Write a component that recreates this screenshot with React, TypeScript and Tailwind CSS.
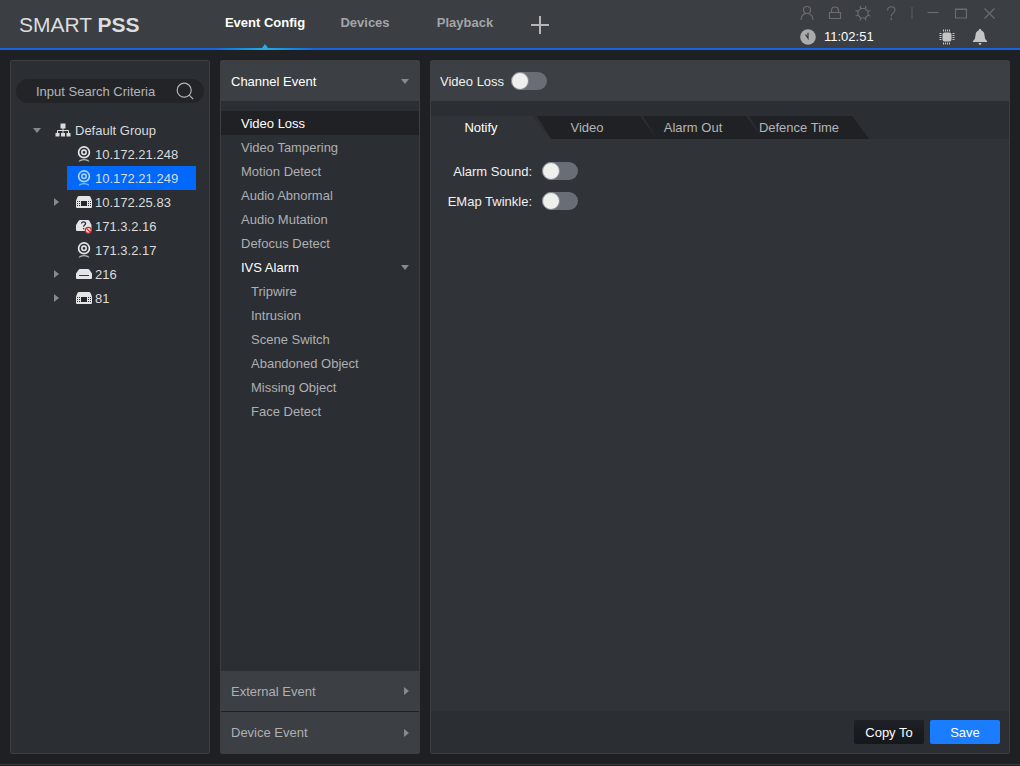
import React, { useState } from 'react';
import clsx from 'clsx';

type IconProps = { className?: string };

const CameraIcon: React.FC<IconProps> = ({ className }) => (
  <svg viewBox="0 0 16 16" className={clsx('h-4 w-4', className)} fill="none" stroke="currentColor">
    <circle cx="8" cy="6.3" r="5.4" strokeWidth="1.7" />
    <circle cx="8" cy="6.3" r="2.2" strokeWidth="1.6" />
    <path d="M3 15.4c2-2.4 8-2.4 10 0" strokeWidth="1.1" opacity=".75" />
  </svg>
);

const NvrIcon: React.FC<IconProps> = ({ className }) => (
  <svg viewBox="0 0 16 16" className={clsx('h-4 w-4', className)}>
    <path d="M3 2h10q1 0 1.500 1L16 6.500V13q0 1-1 1H1q-1 0-1-1V6.500L1.500 3Q2 2 3 2z" fill="currentColor" />
    <rect x="5" y="7" width="6" height="5" fill="#25272b" />
    <path
      d="M1 7.500h3M1 9.500h3M1 11.500h3M12 7.500h3M12 9.500h3M12 11.500h3"
      stroke="#2b2d31"
      strokeWidth="1"
      strokeDasharray="1 1"
    />
  </svg>
);

const DvrIcon: React.FC<IconProps> = ({ className }) => (
  <svg viewBox="0 0 16 16" className={clsx('h-4 w-4', className)}>
    <path d="M4 3h8q1 0 1.500 1L16 7.500V12q0 1-1 1H1q-1 0-1-1V7.500L2.500 4Q3 3 4 3z" fill="currentColor" />
    <path d="M3 9.500h10" stroke="#35373b" strokeWidth="1" />
  </svg>
);

const OfflineIcon: React.FC<IconProps> = ({ className }) => (
  <svg viewBox="0 0 16 16" className={clsx('h-4 w-4', className)} fill="none">
    <path d="M4 2h8q1 0 1.500 1L15.500 7v5.500q0 .5-1 .5H1q-1 0-1-1V7l2.500-4Q3 2 4 2z" fill="currentColor" />
    <path d="M5.6 5.6c0-2.4 4-2.4 4 0 0 1.5-2 1.5-2 3.2M7.6 10v1.2" stroke="#2b2d31" strokeWidth="1.3" />
    <circle cx="12.3" cy="12.3" r="3" fill="#f3dede" stroke="#d0242c" strokeWidth="1.2" />
    <path d="M10.4 10.400l3.800 3.800" stroke="#d0242c" strokeWidth="1.2" />
  </svg>
);

const GroupIcon: React.FC<IconProps> = ({ className }) => (
  <svg viewBox="0 0 16 16" className={clsx('h-4 w-4', className)}>
    <path d="M8 6v3M2.500 11V8.500h11V11M8 8v3" stroke="currentColor" strokeWidth="1" fill="none" />
    <path d="M5.500 1.500h5v5h-5zM.5 11h4v3.500h-4zM6 11h4v3.500H6zM11.500 11h4v3.500h-4z" fill="currentColor" />
  </svg>
);

const CaretDown = () => (
  <svg viewBox="0 0 8 5" className="h-[5px] w-2 text-[#87898c]">
    <path d="M0 0h8L4 5z" fill="currentColor" />
  </svg>
);

const CaretRight = () => (
  <svg viewBox="0 0 5 8" className="h-2 w-[5px] text-[#87898c]">
    <path d="M0 0v8l5-4z" fill="currentColor" />
  </svg>
);

const windowActions = [
  { label: 'User', d: 'M8 1.500a3.500 3.500 0 1 1 0 7a3.500 3.500 0 1 1 0-7M2 15c.3-3.500 2-6 4.500-6.700M14 15c-.3-3.500-2-6-4.500-6.700' },
  { label: 'Lock', d: 'M2.500 7.500h11v6h-11zM4.500 7.500V5.500q0-3.500 3.500-3.500 3.500 0 3.500 3.500v2' },
  {
    label: 'Settings',
    d: 'M5.800 3.500h4.400l2.800 2.800v3.900l-2.800 2.800H5.800L3 10.200V6.300zM5.800 3.500L5 1M10.200 3.500L11 1M13 6.300l2.500-.8M13 10.200l2.500.8M10.200 13l.8 2.500M5.800 13L5 15.500M3 10.200L.5 11M3 6.300L.5 5.500',
  },
  { label: 'Help', d: 'M4.500 5.500c0-5 7.500-4.800 7.500-.5 0 2.800-3.700 3-3.700 6.500M8.300 13v2' },
];

const windowControls = [
  { label: 'Minimize', d: 'M2.500 7.500h11' },
  { label: 'Maximize', d: 'M2.500 4h11v9h-11zM2.500 4.500h11' },
  { label: 'Close', d: 'M3.500 3.500l10 10M13.500 3.500l-10 10' },
];

const WindowButton: React.FC<{ label: string; d: string }> = ({ label, d }) => (
  <button aria-label={label} className="flex h-6 w-7 items-center justify-center text-[#6a6c70]">
    <svg viewBox="0 0 16 16" className="h-4 w-4" fill="none" stroke="currentColor" strokeWidth="1.2">
      <path d={d} />
    </svg>
  </button>
);

const navItems = ['Event Config', 'Devices', 'Playback'];

const Header: React.FC = () => {
  const [active, setActive] = useState('Event Config');

  return (
    <header className="flex h-[50px] border-b-2 border-[#1766e0] bg-[#3b3e42]">
      <div className="flex w-[215px] items-center pl-[19px] text-[21px] text-[#dcdddf]">
        <span>
          SMART <b>PSS</b>
        </span>
      </div>
      <nav className="flex">
        {navItems.map((item) => (
          <button
            key={item}
            onClick={() => setActive(item)}
            className={clsx(
              'relative h-12 w-[100px] pb-[3px] text-[13px] font-bold',
              active === item ? 'text-white' : 'text-[#a3a5a8]'
            )}
          >
            {item}
            {active === item && (
              <span className="absolute inset-x-0 -bottom-[2px] flex flex-col items-center">
                <svg viewBox="0 0 6 4" className="h-1 w-1.5">
                  <path d="M3 0l3 4H0z" fill="#25aee4" />
                </svg>
                <span className="h-[2px] w-full bg-linear-to-r from-[#1766e0] via-[#25aee4] to-[#1766e0]" />
              </span>
            )}
          </button>
        ))}
        <button aria-label="Add" className="ml-4 flex h-12 items-center pt-[2px] text-[#b4b6b8]">
          <svg viewBox="0 0 18 18" className="h-[18px] w-[18px]" stroke="currentColor" strokeWidth="2">
            <path d="M9 0v18M0 9h18" />
          </svg>
        </button>
      </nav>
      <div className="ml-auto flex flex-col pt-px pr-[17px]">
        <div className="flex items-center">
          {windowActions.map((a) => (
            <WindowButton key={a.label} {...a} />
          ))}
          <span className="mx-1.5 h-3 w-[2px] bg-[#4a4d51]" />
          {windowControls.map((c) => (
            <WindowButton key={c.label} {...c} />
          ))}
        </div>
        <div className="flex h-6 items-center pr-[15px] pl-[7px]">
          <svg viewBox="0 0 16 16" className="h-4 w-4">
            <circle cx="8" cy="8" r="7.8" fill="#a9abad" />
            <path d="M5.500 5.500L8 9.200V3.800" stroke="#3b3e42" strokeWidth="1.300" fill="none" />
          </svg>
          <time className="ml-2 text-[13px] text-white">11:02:51</time>
          <div className="ml-auto flex items-center gap-[17px] text-[#c3c4c6]">
            <button aria-label="System status">
              <svg viewBox="0 0 16 16" className="h-4 w-4">
                <rect x="3.500" y="3.500" width="9" height="9" rx="2" fill="currentColor" />
                <path
                  d="M4.500 0.500v2M6.500 0.500v2M8.500 0.500v2M10.500 0.500v2M4.500 13.500v2M6.500 13.500v2M8.500 13.500v2M10.500 13.500v2M0.500 4.500h2M0.500 6.500h2M0.500 8.500h2M0.500 10.500h2M13.500 4.500h2M13.500 6.500h2M13.500 8.500h2M13.500 10.500h2"
                  stroke="currentColor"
                  strokeWidth="1"
                />
              </svg>
            </button>
            <button aria-label="Alarms">
              <svg viewBox="0 0 16 16" className="h-4 w-4" fill="currentColor">
                <path d="M8 0q1.300 0 1.400 1.400Q12.500 2.500 12.500 6.500q0 3.500 2.500 5.500v1H1v-1q2.500-2 2.500-5.500Q3.500 2.500 6.600 1.400 6.700 0 8 0M6.500 14h3q-.3 2-1.500 2t-1.500-2" />
              </svg>
            </button>
          </div>
        </div>
      </div>
    </header>
  );
};

const devices = [
  { name: '10.172.21.248', icon: CameraIcon },
  { name: '10.172.21.249', icon: CameraIcon },
  { name: '10.172.25.83', icon: NvrIcon, expandable: true },
  { name: '171.3.2.16', icon: OfflineIcon },
  { name: '171.3.2.17', icon: CameraIcon },
  { name: '216', icon: DvrIcon, expandable: true },
  { name: '81', icon: NvrIcon, expandable: true },
];

const DeviceTree: React.FC = () => {
  const [selected, setSelected] = useState('10.172.21.249');

  return (
    <aside className="w-[200px] shrink-0 rounded-xs border border-[#3c3e41] bg-[#2b2e32] px-[5px] pt-[18px]">
      <div className="flex h-6 items-center rounded-full bg-[#222428] pr-2.5 pl-5">
        <input
          type="text"
          aria-label="Search devices"
          placeholder="Input Search Criteria"
          className="h-6 w-full min-w-0 bg-transparent pt-px outline-none placeholder:text-[#b3b5b7]"
        />
        <button aria-label="Search" className="text-[#b3b5b7]">
          <svg viewBox="0 0 18 18" className="h-[18px] w-[18px]" fill="none" stroke="currentColor" strokeWidth="1.200">
            <circle cx="8.200" cy="8.200" r="7" />
            <path d="M13.200 13.200l4 4" />
          </svg>
        </button>
      </div>
      <ul className="mt-[15px] text-[#dadbdc]">
        <li>
          <button className="flex h-6 items-center pl-[17px]">
            <CaretDown />
            <GroupIcon className="ml-[14px]" />
            <span className="ml-1">Default Group</span>
          </button>
          <ul>
            {devices.map(({ name, icon: Icon, expandable }) => (
              <li key={name} className="flex h-6 items-center">
                <span className="flex w-[51px] justify-end pr-2">{expandable && <CaretRight />}</span>
                <button
                  onClick={() => setSelected(name)}
                  className={clsx(
                    'flex h-6 items-center gap-[3px] pr-[18px] pl-[9px]',
                    selected === name && 'bg-[#0068fb]'
                  )}
                >
                  <Icon className={selected === name ? 'text-[#a9d4ff]' : 'text-[#e4e5e6]'} />
                  {name}
                </button>
              </li>
            ))}
          </ul>
        </li>
      </ul>
    </aside>
  );
};

const channelEvents = [
  'Video Loss',
  'Video Tampering',
  'Motion Detect',
  'Audio Abnormal',
  'Audio Mutation',
  'Defocus Detect',
];

const ivsEvents = ['Tripwire', 'Intrusion', 'Scene Switch', 'Abandoned Object', 'Missing Object', 'Face Detect'];

const EventMenu: React.FC<{ event: string; onSelect: (event: string) => void }> = ({ event, onSelect }) => (
  <aside className="flex w-[200px] shrink-0 flex-col rounded-xs border border-[#3c3e41] bg-[#2b2e32] text-[#aeb0b2]">
    <button className="flex h-10 items-center justify-between bg-[#3c3f43] px-2.5 text-white">
      Channel Event
      <CaretDown />
    </button>
    <ul className="flex-1 pt-2.5">
      {channelEvents.map((name) => (
        <li key={name}>
          <button
            onClick={() => onSelect(name)}
            className={clsx('h-6 w-full pl-5 text-left', event === name && 'bg-[#202124] text-white')}
          >
            {name}
          </button>
        </li>
      ))}
      <li>
        <button className="flex h-6 w-full items-center justify-between pr-2.5 pl-5 text-white">
          IVS Alarm
          <CaretDown />
        </button>
        <ul>
          {ivsEvents.map((name) => (
            <li key={name}>
              <button
                onClick={() => onSelect(name)}
                className={clsx('h-6 w-full pl-[30px] text-left', event === name && 'bg-[#202124] text-white')}
              >
                {name}
              </button>
            </li>
          ))}
        </ul>
      </li>
    </ul>
    <button className="flex h-10 items-center justify-between bg-[#3c3f43] px-2.5">
      External Event
      <CaretRight />
    </button>
    <button className="flex h-[42px] items-center justify-between border-t border-[#1f2124] bg-[#3c3f43] px-2.5">
      Device Event
      <CaretRight />
    </button>
  </aside>
);

const Switch: React.FC<{ id: string }> = ({ id }) => (
  <input
    id={id}
    type="checkbox"
    role="switch"
    className="h-[18px] w-9 appearance-none rounded-full bg-[#696d75] before:block before:size-[18px] before:rounded-full before:border before:border-[#85888e] before:bg-[#efefee] checked:bg-[#0068fb] checked:before:ml-auto"
  />
);

const tabs = ['Notify', 'Video', 'Alarm Out', 'Defence Time'];

const EventSettings: React.FC<{ event: string }> = ({ event }) => {
  const [tab, setTab] = useState('Notify');

  return (
    <main className="flex min-w-0 flex-1 flex-col rounded-xs border border-[#3c3e41] bg-[#303337]">
      <div className="flex h-10 items-center gap-[7px] bg-[#3c3f43] pl-[9px] text-[#f0f0f0]">
        <label htmlFor="event-enabled">{event}</label>
        <Switch id="event-enabled" />
      </div>
      <div role="tablist" className="flex bg-[#2b2e32] pt-[15px]">
        {tabs.map((name, i) => (
          <button
            key={name}
            role="tab"
            aria-selected={tab === name}
            onClick={() => setTab(name)}
            className={clsx(
              'h-[23px] w-[120px] pr-5 [clip-path:polygon(0_0,103px_0,100%_100%,14px_100%)] first:[clip-path:polygon(0_0,101px_0,100%_100%,0_100%)]',
              i > 0 && '-ml-[14px]',
              tab === name ? 'bg-[#303337] text-white' : 'bg-[#202125] text-[#b3b5b7]'
            )}
          >
            {name}
          </button>
        ))}
      </div>
      <div className="flex-1 pt-[17px] text-[#f0f0f0]">
        <div className="flex h-[30px] items-center gap-2.5">
          <label htmlFor="alarm-sound" className="w-[101px] text-right">
            Alarm Sound:
          </label>
          <Switch id="alarm-sound" />
        </div>
        <div className="flex h-[30px] items-center gap-2.5">
          <label htmlFor="emap-twinkle" className="w-[101px] text-right">
            EMap Twinkle:
          </label>
          <Switch id="emap-twinkle" />
        </div>
      </div>
      <div className="flex h-[42px] items-center justify-end gap-1.5 bg-[#2b2e32] pr-[9px] text-white">
        <button className="h-6 w-[70px] rounded-xs bg-linear-to-b from-[#1d2024] to-[#15181b]">Copy To</button>
        <button className="h-6 w-[70px] rounded-xs bg-[#1a7cff]">Save</button>
      </div>
    </main>
  );
};

const App: React.FC = () => {
  const [event, setEvent] = useState('Video Loss');

  return (
    <div className="flex min-h-screen flex-col bg-[#1f2024] font-['Liberation_Sans',Arial,sans-serif] text-[13px] leading-[15px]">
      <Header />
      <div className="flex flex-1 gap-2.5 p-2.5">
        <DeviceTree />
        <EventMenu event={event} onSelect={setEvent} />
        <EventSettings event={event} />
      </div>
      <div className="h-[2px] border-t border-[#37393c]" />
    </div>
  );
};

export default App;
